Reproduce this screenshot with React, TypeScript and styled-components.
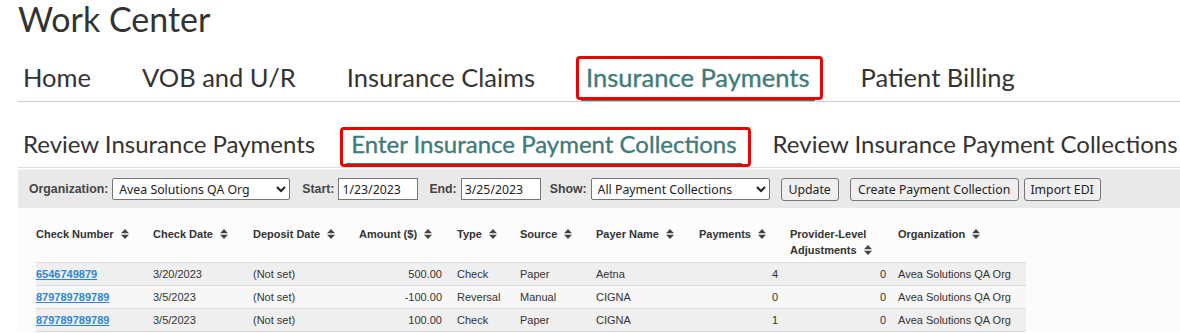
import styled, { createGlobalStyle } from "styled-components";

const GlobalStyle = createGlobalStyle`
    body {
        margin: 0;
        background: #fff;
        font-family: "Liberation Sans", Arial, sans-serif;
    }
`;

interface TabProps {
    label: string;
    active?: boolean;
    box?: [number, number, number, number];
}

interface PaymentRow {
    check: string;
    checkDate: string;
    depositDate: string;
    amount: string;
    type: string;
    source: string;
    payer: string;
    payments: number;
    adjustments: number;
    org: string;
}

const mainTabs: TabProps[] = [
    { label: "Home" },
    { label: "VOB and U/R" },
    { label: "Insurance Claims" },
    { label: "Insurance Payments", active: true, box: [-5, -8, -5, -3] },
    { label: "Patient Billing" },
];

const subTabs: TabProps[] = [
    { label: "Review Insurance Payments" },
    { label: "Enter Insurance Payment Collections", active: true, box: [-1, -9, -6, -4] },
    { label: "Review Insurance Payment Collections" },
];

const columns = [
    { title: "Check Number", width: 117 },
    { title: "Check Date", width: 100 },
    { title: "Deposit Date", width: 106 },
    { title: "Amount ($)", width: 98 },
    { title: "Type", width: 63 },
    { title: "Source", width: 76 },
    { title: "Payer Name", width: 103 },
    { title: "Payments", width: 91 },
    { title: "Provider-Level Adjustments", width: 108 },
    { title: "Organization", width: 128 },
];

const rows: PaymentRow[] = [
    { check: "6546749879", checkDate: "3/20/2023", depositDate: "(Not set)", amount: "500.00", type: "Check", source: "Paper", payer: "Aetna", payments: 4, adjustments: 0, org: "Avea Solutions QA Org" },
    { check: "879789789789", checkDate: "3/5/2023", depositDate: "(Not set)", amount: "-100.00", type: "Reversal", source: "Manual", payer: "CIGNA", payments: 0, adjustments: 0, org: "Avea Solutions QA Org" },
    { check: "879789789789", checkDate: "3/5/2023", depositDate: "(Not set)", amount: "100.00", type: "Check", source: "Paper", payer: "CIGNA", payments: 1, adjustments: 0, org: "Avea Solutions QA Org" },
];

function SortIcon() {
    return (
        <SortSvg width="8" height="10" viewBox="0 0 8 10">
            <path d="M0 4.2 L4 0 L8 4.2 Z" fill="#444" />
            <path d="M0 5.8 L8 5.8 L4 10 Z" fill="#444" />
        </SortSvg>
    );
}

function App() {
    return (
        <Page>
            <GlobalStyle />
            <Title>Work Center</Title>

            <MainNav>
                {mainTabs.map(t => (
                    <MainTab key={t.label} $active={t.active}>
                        {t.label}
                        {t.box && <Highlight $box={t.box} />}
                    </MainTab>
                ))}
            </MainNav>

            <SubNav>
                {subTabs.map(t => (
                    <SubTab key={t.label} $active={t.active}>
                        {t.label}
                        {t.box && <Highlight $box={t.box} />}
                    </SubTab>
                ))}
            </SubNav>

            <Toolbar>
                <Label>Organization:</Label>
                <Select $width={178} defaultValue="org">
                    <option value="org">Avea Solutions QA Org</option>
                </Select>
                <Label $gap={12}>Start:</Label>
                <DateInput defaultValue="1/23/2023" />
                <Label $gap={11}>End:</Label>
                <DateInput defaultValue="3/25/2023" />
                <Label $gap={9}>Show:</Label>
                <Select $width={179} defaultValue="all">
                    <option value="all">All Payment Collections</option>
                </Select>
                <Button $gap={11} $width={58}>Update</Button>
                <Button $gap={11} $width={169}>Create Payment Collection</Button>
                <Button $gap={5} $width={77}>Import EDI</Button>
            </Toolbar>

            <Content>
                <Table>
                    <colgroup>
                        {columns.map(c => <col key={c.title} style={{ width: c.width }} />)}
                    </colgroup>
                    <thead>
                        <tr>
                            {columns.map(c => (
                                <HeadCell key={c.title}>
                                    {c.title}
                                    <SortIcon />
                                </HeadCell>
                            ))}
                        </tr>
                    </thead>
                    <tbody>
                        {rows.map((r, i) => (
                            <Row key={i} $odd={i % 2 === 0}>
                                <Cell><CheckLink href="#">{r.check}</CheckLink></Cell>
                                <Cell>{r.checkDate}</Cell>
                                <Cell>{r.depositDate}</Cell>
                                <Cell $right $pad={15}>{r.amount}</Cell>
                                <Cell>{r.type}</Cell>
                                <Cell>{r.source}</Cell>
                                <Cell>{r.payer}</Cell>
                                <Cell $right>{r.payments}</Cell>
                                <Cell $right>{r.adjustments}</Cell>
                                <Cell>{r.org}</Cell>
                            </Row>
                        ))}
                    </tbody>
                </Table>
            </Content>
        </Page>
    );
}

export default App;

const Page = styled.div`
    padding-left: 18px;
    width: 1162px;
`;

const Title = styled.h1`
    margin: 0;
    font-family: Lato, "Liberation Sans", sans-serif;
    font-size: 34px;
    font-weight: 400;
    line-height: 38px;
    color: #333;
`;

const MainNav = styled.div`
    display: flex;
    gap: 41px;
    padding-top: 23px;
    border-bottom: 1px solid #ccc;
`;

const MainTab = styled.div<{ $active?: boolean }>`
    position: relative;
    padding: 0 5px 4px;
    font-family: Lato, "Liberation Sans", sans-serif;
    font-size: 25.5px;
    line-height: 32px;
    color: ${p => (p.$active ? "#3f7b7b" : "#333")};
    -webkit-text-stroke: ${p => (p.$active ? "0.35px #3f7b7b" : "0")};
    border-bottom: 4px solid ${p => (p.$active ? "#3f7b7b" : "transparent")};
    white-space: nowrap;
`;

const SubNav = styled.div`
    display: flex;
    gap: 26px;
    padding-top: 26px;
    border-bottom: 1px solid #ddd;
`;

const SubTab = styled(MainTab)`
    padding: 0 5px 3px;
    font-size: 24px;
`;

const Highlight = styled.span<{ $box: [number, number, number, number] }>`
    position: absolute;
    top: ${p => p.$box[0]}px;
    right: ${p => p.$box[1]}px;
    left: ${p => p.$box[2]}px;
    bottom: ${p => p.$box[3]}px;
    border: 3px solid #ee0000;
    border-radius: 4px;
    -webkit-text-stroke: 0;
    pointer-events: none;
`;

const Toolbar = styled.div`
    display: flex;
    align-items: center;
    height: 38px;
    margin-top: 1px;
    padding-left: 11px;
    background: #e9e9e9;
    border-top: 1px solid #f3f3f3;
`;

const Label = styled.span<{ $gap?: number }>`
    margin-left: ${p => p.$gap ?? 0}px;
    margin-right: 4px;
    font-family: "Liberation Sans", Arial, sans-serif;
    font-size: 12.3px;
    font-weight: 700;
    color: #444;
`;

const Select = styled.select<{ $width: number }>`
    width: ${p => p.$width}px;
    height: 22px;
    padding: 0 2px;
    font-family: "Noto Sans", "Open Sans", sans-serif;
    font-size: 12.3px;
    color: #222;
    background: #fff;
    border: 1px solid #767676;
    border-radius: 2px;
`;

const DateInput = styled.input`
    box-sizing: border-box;
    width: 80px;
    height: 22px;
    padding: 0 3px;
    font-family: "Noto Sans", "Open Sans", sans-serif;
    font-size: 12.3px;
    color: #222;
    border: 1px solid #767676;
    border-radius: 0;
`;

const Button = styled.button<{ $gap: number; $width: number }>`
    box-sizing: border-box;
    width: ${p => p.$width}px;
    height: 23px;
    margin-left: ${p => p.$gap}px;
    padding: 0;
    font-family: "Noto Sans", "Open Sans", sans-serif;
    font-size: 12.3px;
    color: #222;
    background: #efefef;
    border: 1px solid #767676;
    border-radius: 3px;
`;

const Content = styled.div`
    padding: 14px 0 0 18px;
    background: #fcfcfc;
`;

const Table = styled.table`
    width: 990px;
    table-layout: fixed;
    border-collapse: collapse;
    font-family: "Liberation Sans", Arial, sans-serif;
    font-size: 11px;
    color: #333;
`;

const HeadCell = styled.th`
    padding: 4px 12px 4px 0;
    height: 32px;
    text-align: left;
    vertical-align: top;
    font-weight: 700;
    line-height: 16px;
    color: #333;
`;

const SortSvg = styled.svg`
    margin-left: 7px;
    vertical-align: -1px;
`;

const Row = styled.tr<{ $odd: boolean }>`
    height: 23px;
    background: ${p => (p.$odd ? "#f0efef" : "#f7f7f7")};
    border-top: 1px solid #dcdcdc;
    border-bottom: 1px solid #dcdcdc;
`;

const Cell = styled.td<{ $right?: boolean; $pad?: number }>`
    padding: 0 ${p => p.$pad ?? 12}px 0 0;
    text-align: ${p => (p.$right ? "right" : "left")};
    white-space: nowrap;
`;

const CheckLink = styled.a`
    color: #2f86d6;
    font-weight: 700;
    text-decoration: underline;
`;
